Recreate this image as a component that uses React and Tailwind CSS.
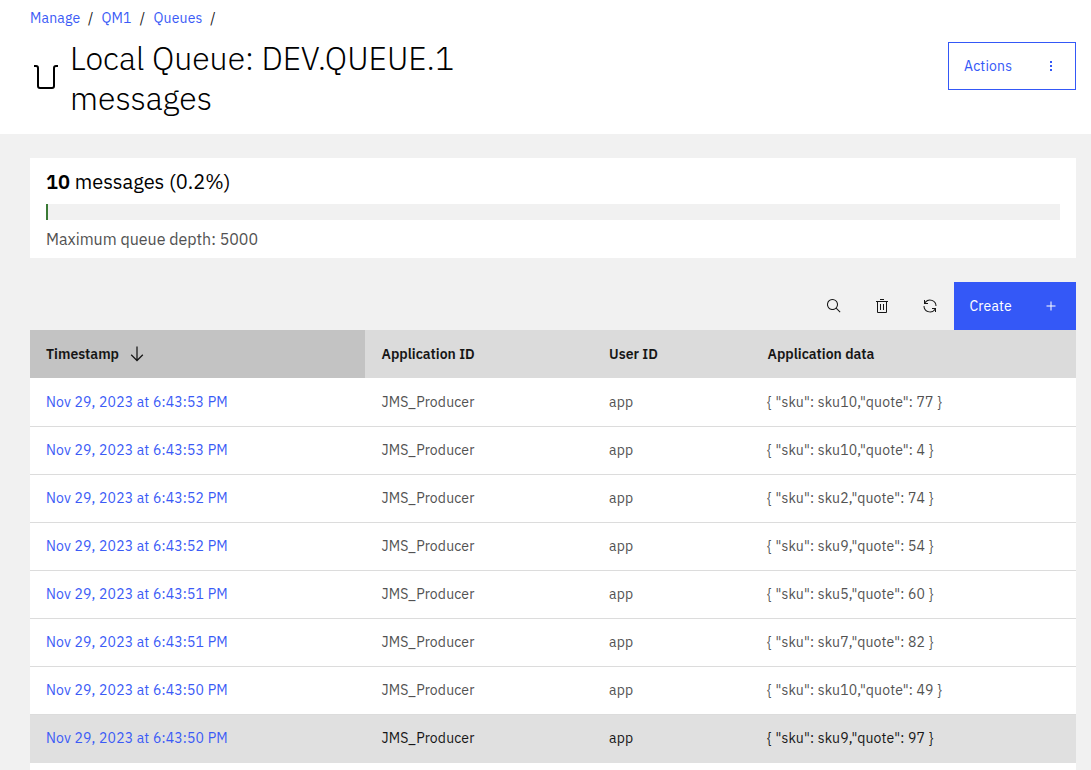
import React from "react";

const rows = [
  ["Nov 29, 2023 at 6:43:53 PM", '{ "sku": sku10,"quote": 77 }'],
  ["Nov 29, 2023 at 6:43:53 PM", '{ "sku": sku10,"quote": 4 }'],
  ["Nov 29, 2023 at 6:43:52 PM", '{ "sku": sku2,"quote": 74 }'],
  ["Nov 29, 2023 at 6:43:52 PM", '{ "sku": sku9,"quote": 54 }'],
  ["Nov 29, 2023 at 6:43:51 PM", '{ "sku": sku5,"quote": 60 }'],
  ["Nov 29, 2023 at 6:43:51 PM", '{ "sku": sku7,"quote": 82 }'],
  ["Nov 29, 2023 at 6:43:50 PM", '{ "sku": sku10,"quote": 49 }'],
  ["Nov 29, 2023 at 6:43:50 PM", '{ "sku": sku9,"quote": 97 }'],
];

const HOVERED_ROW = 7;

function Icon({ d, className = "size-4" }) {
  return (
    <svg viewBox="0 0 32 32" fill="currentColor" className={className} aria-hidden="true">
      <path d={d} />
    </svg>
  );
}

const paths = {
  search:
    "M29,27.5859l-7.5521-7.5521a11.0177,11.0177,0,1,0-1.4141,1.4141L27.5859,29ZM4,13a9,9,0,1,1,9,9A9.01,9.01,0,0,1,4,13Z",
  trash:
    "M12 12H14V24H12zM18 12H20V24H18zM4 6V8H6V28a2 2 0 002 2H24a2 2 0 002-2V8h2V6zM8 28V8H24V28zM12 2H20V4H12z",
  renew:
    "M12 10H6.78A11 11 0 0127 16h2A13 13 0 006 7.68V4H4v8h8zM20 22h5.22A11 11 0 015 16H3a13 13 0 0023 8.32V28h2V20H20z",
  arrowDown: "M24.59 16.59L17 24.17 17 4 15 4 15 24.17 7.41 16.59 6 18 16 28 26 18z",
  add: "M17 15V7H15v8H7v2h8v8h2V17h8V15z",
  overflow: "M14 6h4v4h-4zM14 14h4v4h-4zM14 22h4v4h-4z",
};

function Breadcrumb() {
  return (
    <nav className="flex h-[18px] items-center text-sm leading-[18px] tracking-[0.16px] text-[#161616]">
      <a className="w-[50px] whitespace-nowrap text-[#3b5bf6]">Manage</a>
      <span className="w-[21.5px] text-center">/</span>
      <a className="w-[30px] whitespace-nowrap text-[#3b5bf6]">QM1</a>
      <span className="w-[22px] text-center">/</span>
      <a className="w-[49px] whitespace-nowrap text-[#3b5bf6]">Queues</a>
      <span className="w-[21px] text-center">/</span>
    </nav>
  );
}

function Header() {
  return (
    <header className="flex h-[134px] flex-col bg-white pr-[15px] pl-[30px] pt-[9px]">
      <Breadcrumb />
      <div className="mt-[11px] flex items-start">
        <svg viewBox="0 0 32 32" className="mt-[23px] size-8 shrink-0" fill="none" stroke="#000" strokeWidth="2" aria-hidden="true">
          <path d="M4 5H6Q8 5 8 7V25Q8 27 10 27H22Q24 27 24 25V7Q24 5 26 5H28" />
        </svg>
        <h1 className="ml-2 w-[420px] text-[32px] leading-10 font-light text-black">
          <span className="block whitespace-nowrap">Local Queue: DEV.QUEUE.1</span>
          <span className="block">messages</span>
        </h1>
        <button className="mt-1 ml-auto flex h-12 w-32 items-center justify-between border border-[#3458f7] pr-4 pl-[15px] text-sm tracking-[0.16px] text-[#3458f7]">
          Actions
          <Icon d={paths.overflow} />
        </button>
      </div>
    </header>
  );
}

function DepthCard() {
  return (
    <section className="h-[100px] bg-white px-4 pt-3">
      <p className="text-xl leading-6 text-black">
        <b className="font-semibold">10</b> messages (0.2%)
      </p>
      <div className="mt-[10px] h-4 bg-[#f1f1f1]">
        <div className="h-4 w-[2px] bg-[#3a7a35]" />
      </div>
      <p className="mt-[9px] text-base leading-5 text-[#525252]">Maximum queue depth: 5000</p>
    </section>
  );
}

function Toolbar() {
  return (
    <div className="mt-6 flex h-12 justify-end text-[#161616]">
      <button className="grid size-12 place-items-center"><Icon d={paths.search} /></button>
      <button className="grid size-12 place-items-center"><Icon d={paths.trash} /></button>
      <button className="grid size-12 place-items-center"><Icon d={paths.renew} /></button>
      <button className="flex w-[122px] items-center justify-between bg-[#3458f7] pr-[17px] pl-[15.5px] text-sm tracking-[0.16px] text-white">
        Create
        <Icon d={paths.add} />
      </button>
    </div>
  );
}

function Table() {
  return (
    <div className="text-sm">
      <div className="grid h-12 grid-cols-[335px_228px_158px_1fr] bg-[#dbdbdb] font-semibold text-[#161616]">
        <div className="flex items-center bg-[#c3c3c3] px-4">
          Timestamp
          <Icon d={paths.arrowDown} className="ml-[8px] size-5" />
        </div>
        <div className="flex items-center pr-4 pl-[16.5px]">Application ID</div>
        <div className="flex items-center px-4">User ID</div>
        <div className="flex items-center pr-4 pl-[16.5px]">Application data</div>
      </div>
      {rows.map(([time, data], i) => (
        <div
          key={i}
          className={
            "grid h-12 grid-cols-[335px_228px_158px_1fr] border-t pb-px tracking-[0.16px] " +
            (i === 0 ? "border-white " : "border-[#dcdcdc] ") +
            (i === HOVERED_ROW ? "bg-[#e0e0e0] text-[#161616]" : "bg-white text-[#525252]")
          }
        >
          <a className="flex items-center px-4 text-[#3b5bf6]">{time}</a>
          <div className="flex items-center pr-4 pl-[16.5px]">JMS_Producer</div>
          <div className="flex items-center px-4">app</div>
          <div className="flex items-center px-4">{data}</div>
        </div>
      ))}
      <div className="h-2 border-t border-[#e0e0e0] bg-white" />
    </div>
  );
}

export default function App() {
  return (
    <div className="h-[770px] overflow-hidden bg-[#f1f1f1] font-['IBM_Plex_Sans',Roboto,sans-serif]">
      <Header />
      <main className="pt-6 pr-[15px] pl-[30px]">
        <DepthCard />
        <Toolbar />
        <Table />
      </main>
    </div>
  );
}
